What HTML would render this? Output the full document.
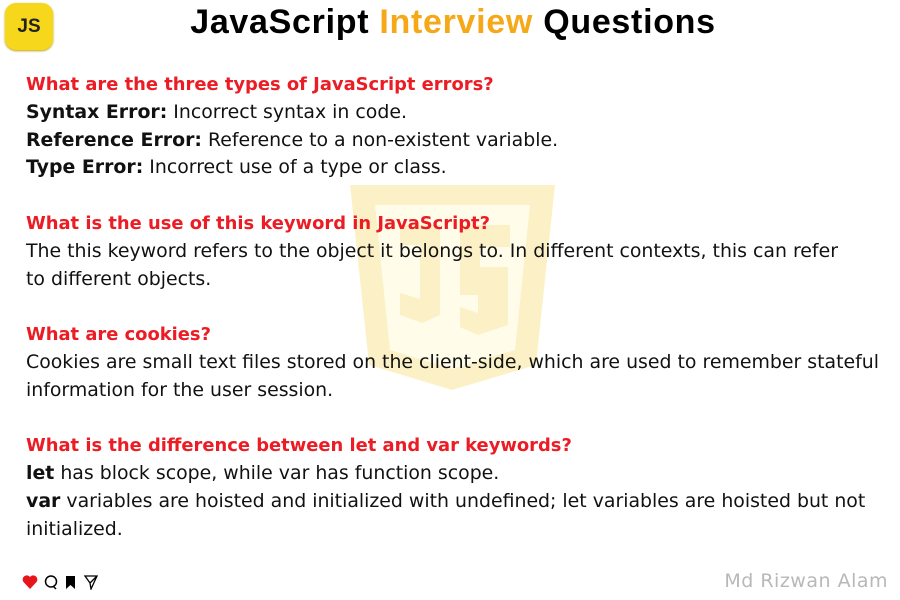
<!DOCTYPE html>
<html><head><meta charset="utf-8"><style>
body{margin:0;width:900px;height:600px;background:#fff;position:relative;overflow:hidden;font-family:"DejaVu Sans","Liberation Sans",sans-serif;}
.logo{position:absolute;left:5px;top:3px;width:48px;height:47px;background:#f7d71c;border-radius:11px;box-shadow:0 1px 2px #b9a000;}
.logo span{position:absolute;left:0;right:0;top:13px;text-align:center;font:bold 19px "Liberation Sans",sans-serif;color:#222;}
h1{position:absolute;left:0;width:906px;top:3px;margin:0;text-align:center;font:900 34px "Liberation Sans",sans-serif;letter-spacing:0.7px;color:#000;}
h1 b{color:#f5a818;}
.txt{position:absolute;left:26px;top:71px;font-size:18.9px;line-height:27.8px;color:#111;white-space:nowrap;}
.q{color:#ec1c24;font-weight:bold;font-size:17.9px;}
.sp{height:27.8px;}
.wm{position:absolute;left:340px;top:185px;opacity:0.22;}
.icons{position:absolute;left:22px;top:574px;}
.sig{position:absolute;right:12px;top:570px;font:19px "DejaVu Sans",sans-serif;color:#b8b8b8;letter-spacing:0.5px;}
</style></head><body>
<svg class="wm" width="225" height="205" viewBox="0 0 225 205"><path d="M10 0H215L196 180L112 205L29 180Z" fill="#f5c400"/><path d="M35 20H190L175 165L112 184L50 165Z" fill="#fff3a0"/><path d="M60 40h40v90l-18 8-22-8v-22l20 6V60H60Z M120 40h50v22h-30v20h28v58l-30 10-18-8v-20l18 6v-18h-18Z" fill="#f5c400"/></svg>
<div class="logo"><span>JS</span></div>
<h1>JavaScript <b>Interview</b> Questions</h1>
<div class="txt">
<div class="q">What are the three types of JavaScript errors?</div>
<div><b>Syntax Error:</b> Incorrect syntax in code.</div>
<div><b>Reference Error:</b> Reference to a non-existent variable.</div>
<div><b>Type Error:</b> Incorrect use of a type or class.</div>
<div class="sp"></div>
<div class="q">What is the use of this keyword in JavaScript?</div>
<div>The this keyword refers to the object it belongs to. In different contexts, this can refer<br>to different objects.</div>
<div class="sp"></div>
<div class="q">What are cookies?</div>
<div>Cookies are small text files stored on the client-side, which are used to remember stateful<br>information for the user session.</div>
<div class="sp"></div>
<div class="q">What is the difference between let and var keywords?</div>
<div><b>let</b> has block scope, while var has function scope.</div>
<div><b>var</b> variables are hoisted and initialized with undefined; let variables are hoisted but not<br>initialized.</div>
</div>
<svg class="icons" width="80" height="16" viewBox="0 0 80 16">
<path d="M8 15L1.5 8A4 4 0 0 1 8 3A4 4 0 0 1 14.5 8Z" fill="#e8141c"/>
<circle cx="29" cy="7.5" r="5.5" fill="none" stroke="#000" stroke-width="1.5"/><path d="M31 12l3 3" stroke="#000" stroke-width="1.5"/>
<path d="M44 2h9v13l-4.5-4-4.5 4Z" fill="#000"/>
<path d="M63 2h12l-6 13-1-6Z M68 9l7-7" fill="none" stroke="#000" stroke-width="1.3"/>
</svg>
<div class="sig">Md Rizwan Alam</div>
</body></html>
